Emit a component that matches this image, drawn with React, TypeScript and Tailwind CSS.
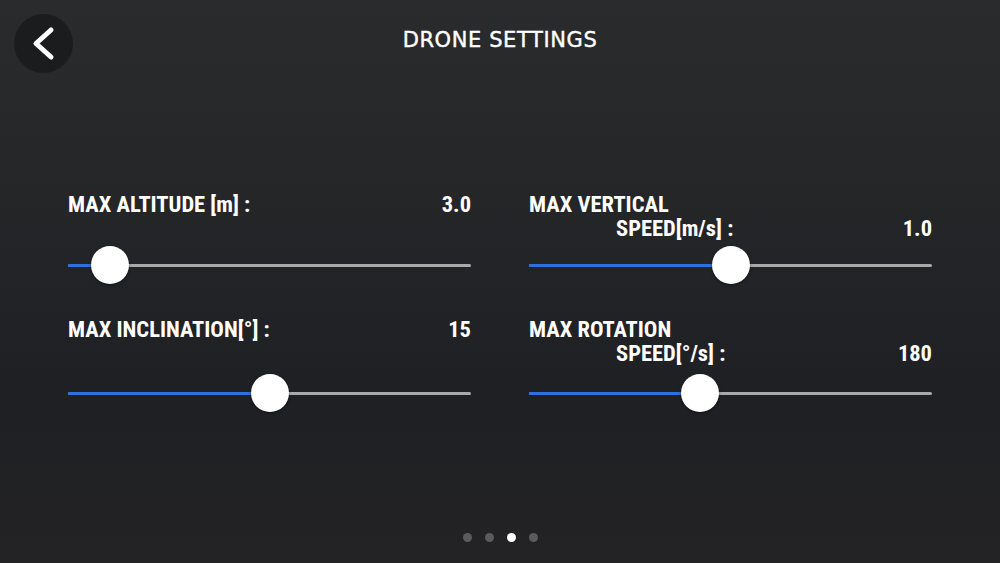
import React from "react";

const labelFont = {
  fontFamily: '"Liberation Sans Narrow", "Roboto Condensed", "DejaVu Sans Condensed", "Liberation Sans", sans-serif',
};

function Slider({ pct }: { pct: number }) {
  return (
    <div className="relative h-[40px] w-full">
      <div className="absolute left-0 right-0 top-[19px] h-[3px] rounded-full bg-[#a9a9a9]" />
      <div
        className="absolute left-0 top-[19px] h-[3px] rounded-full bg-[#2f6fe3]"
        style={{ width: `${pct}%` }}
      />
      <div
        className="absolute top-[1px] h-[38px] w-[38px] -translate-x-1/2 rounded-full bg-white shadow-[0_1px_3px_rgba(0,0,0,0.5)]"
        style={{ left: `${pct}%` }}
      />
    </div>
  );
}

function Setting({
  line1,
  line2,
  value,
  pct,
  lower,
}: {
  line1: string;
  line2?: string;
  value: string;
  pct: number;
  lower?: boolean;
}) {
  return (
    <div className="flex flex-col">
      <div
        className="flex h-[50px] flex-col text-[22.5px] font-bold leading-[24px] text-white"
        style={labelFont}
      >
        {line2 ? (
          <>
            <div>{line1}</div>
            <div className="flex justify-between pl-[87px]">
              <span>{line2}</span>
              <span>{value}</span>
            </div>
          </>
        ) : (
          <div className="flex justify-between">
            <span>{line1}</span>
            <span>{value}</span>
          </div>
        )}
      </div>
      <div className={lower ? "mt-[6px]" : "mt-[3px]"}>
        <Slider pct={pct} />
      </div>
    </div>
  );
}

export default function App() {
  return (
    <div className="relative flex h-[563px] w-[1000px] flex-col overflow-hidden bg-[linear-gradient(180deg,#2a2b2d_0%,#252628_35%,#1f2023_70%,#232325_100%)]">
      <div className="flex h-[86px] items-start px-[14px] pt-[14px]">
        <div className="flex h-[59px] w-[59px] items-center justify-center rounded-full bg-[#1b1c1e]">
          <svg width="59" height="59" viewBox="0 0 59 59">
            <path
              d="M37 16 L22 29.5 L37 43"
              fill="none"
              stroke="white"
              strokeWidth="5"
              strokeLinecap="round"
              strokeLinejoin="round"
            />
          </svg>
        </div>
        <div className="flex-1" />
        <div className="w-[59px]" />
      </div>
      <div
        className="absolute left-0 right-0 top-[25px] text-center text-[21px] tracking-[0.6px] text-white"
        style={{ fontFamily: '"DejaVu Sans", sans-serif', fontWeight: 400, WebkitTextStroke: "0.4px white" }}
      >
        DRONE SETTINGS
      </div>

      <div className="mt-[106px] grid grid-cols-2 gap-x-[58px] gap-y-[32px] px-[68px]">
        <Setting line1="MAX ALTITUDE [m] :" value="3.0" pct={10.5} />
        <Setting line1="MAX VERTICAL" line2="SPEED[m/s] :" value="1.0" pct={50} />
        <Setting line1="MAX INCLINATION[°] :" value="15" pct={50} lower />
        <Setting line1="MAX ROTATION" line2="SPEED[°/s] :" value="180" pct={42.5} lower />
      </div>

      <div className="flex-1" />
      <div className="mb-[21px] flex justify-center gap-[13px]">
        <div className="h-[9px] w-[9px] rounded-full bg-[#5b5b5d]" />
        <div className="h-[9px] w-[9px] rounded-full bg-[#5b5b5d]" />
        <div className="h-[9px] w-[9px] rounded-full bg-white" />
        <div className="h-[9px] w-[9px] rounded-full bg-[#5b5b5d]" />
      </div>
    </div>
  );
}
